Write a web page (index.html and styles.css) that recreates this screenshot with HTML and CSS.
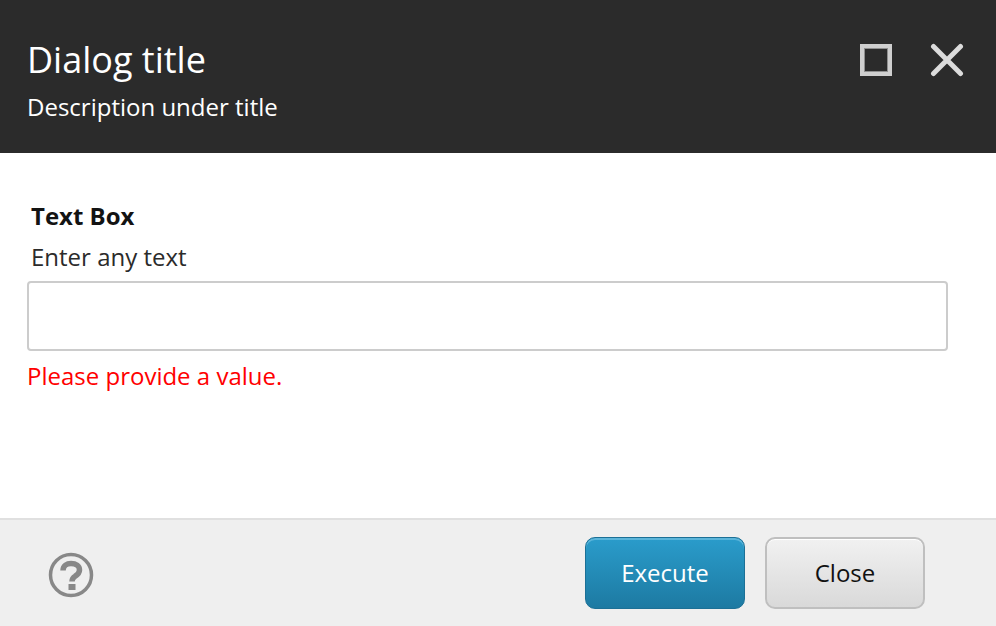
FILE: index.html
```html
<!DOCTYPE html>
<html lang="en">
<head>
    <meta charset="UTF-8">
    <title>Dialog title</title>
    <link rel="stylesheet" href="styles.css">
</head>
<body>
<div class="dialog">
    <div class="dialog-header">
        <div class="header-text">
            <h1>Dialog title</h1>
            <p>Description under title</p>
        </div>
        <div class="header-icons">
            <svg class="icon-max" width="34" height="34" viewBox="0 0 34 34">
                <rect x="3" y="3" width="28" height="28" fill="none" stroke="#cfcfcf" stroke-width="4"/>
                <rect x="5.5" y="5.5" width="23" height="23" fill="none" stroke="#8f8f8f" stroke-width="1"/>
            </svg>
            <svg class="icon-close" width="34" height="34" viewBox="0 0 34 34">
                <path d="M3.5 3.5L30.5 30.5M30.5 3.5L3.5 30.5" stroke="#dcdcdc" stroke-width="5" stroke-linecap="round"/>
            </svg>
        </div>
    </div>
    <div class="dialog-body">
        <div class="field-title">Text Box</div>
        <div class="field-hint">Enter any text</div>
        <input class="field-input" type="text">
        <div class="field-error">Please provide a value.</div>
    </div>
    <div class="dialog-footer">
        <svg class="icon-help" width="46" height="46" viewBox="0 0 46 46">
            <circle cx="23" cy="23" r="20.5" fill="none" stroke="#888" stroke-width="3.5"/>
            <path d="M15 18.5C15 13.5 19 11.5 23 11.5C28 11.5 31.5 14 31.5 18C31.5 21.5 29 23 27 24.3C25 25.5 24 26.5 24 29.5" fill="none" stroke="#888" stroke-width="5.5"/>
            <rect x="20.5" y="32" width="7" height="6" fill="#888"/>
        </svg>
        <div class="buttons">
            <button class="btn btn-primary">Execute</button>
            <button class="btn btn-default">Close</button>
        </div>
    </div>
</div>
</body>
</html>
```

FILE: styles.css
```css
*{
    padding:0;
    margin:0;
    box-sizing: border-box;
}
html,body{
    height: 100%;
}
body{
    font-family: "Open Sans", sans-serif;
    background-color: #fff;
}
.dialog{
    display: flex;
    flex-direction: column;
    height: 626px;
    overflow: hidden;
}
.dialog-header{
    display: flex;
    justify-content: space-between;
    height: 153px;
    padding: 36px 32px 0 27px;
    background-color: #2b2b2b;
    color: #fff;
}
.dialog-header h1{
    font-size: 36px;
    font-weight: 400;
    line-height: 48px;
}
.dialog-header p{
    margin-top: 8px;
    font-size: 24px;
    line-height: 30px;
}
.header-icons{
    display: flex;
    gap: 37px;
    padding-top: 7px;
}
.icon-max,
.icon-close{
    filter: blur(.4px);
}
.dialog-body{
    flex: 1;
    padding: 48px 48px 0 27px;
}
.field-title{
    padding-left: 4px;
    font-size: 24px;
    font-weight: 700;
    line-height: 30px;
    color: #131313;
}
.field-hint{
    margin-top: 11px;
    padding-left: 4px;
    font-size: 24px;
    line-height: 30px;
    color: #2b2b2b;
}
.field-input{
    display: block;
    width: 100%;
    height: 70px;
    margin-top: 9px;
    border: 2px solid #ccc;
    border-radius: 4px;
    background-color: #fff;
}
.field-error{
    margin-top: 10px;
    font-size: 24px;
    line-height: 30px;
    color: #f00;
}
.dialog-footer{
    display: flex;
    justify-content: space-between;
    align-items: center;
    height: 108px;
    padding: 0 71px 0 48px;
    border-top: 2px solid #e0e0e0;
    background-color: #efefef;
}
.icon-help{
    margin-top: 4px;
    filter: blur(.6px);
}
.buttons{
    display: flex;
    gap: 20px;
    margin-bottom: 1px;
}
.btn{
    width: 160px;
    height: 72px;
    border-radius: 10px;
    font-family: "Open Sans", sans-serif;
    font-size: 24px;
}
.btn-primary{
    border: 1px solid #1c7096;
    background: linear-gradient(#2a9ccb, #1d7aa2);
    box-shadow: inset 0 2px 0 #5bb5da;
    color: #fff;
}
.btn-default{
    border: 2px solid #bfbfbf;
    background: linear-gradient(#f1f1f1, #d9d9d9);
    box-shadow: inset 0 1px 0 #fff;
    color: #111;
}
```
